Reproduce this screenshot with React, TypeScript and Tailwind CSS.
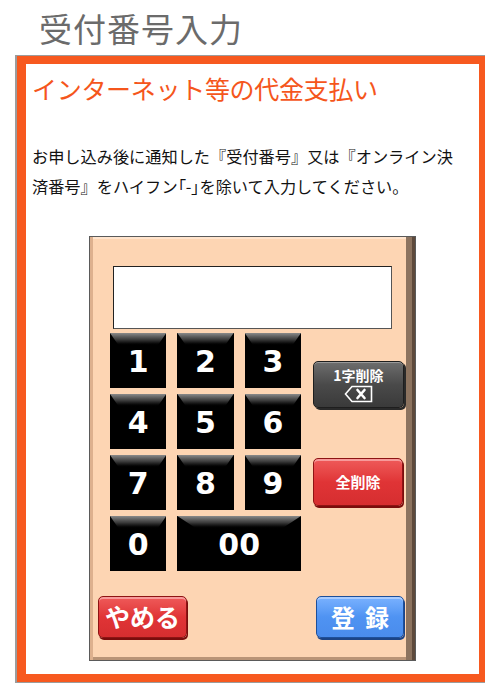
import React from "react";

const jp = { fontFamily: '"Noto Sans CJK JP", "Noto Sans", sans-serif' };
const num = { fontFamily: '"DejaVu Sans", Verdana, sans-serif' };

function Key({ label, wide = false }: { label: string; wide?: boolean }) {
  return (
    <div
      className={`relative flex h-[55px] items-center justify-center bg-black ${
        wide ? "col-span-2" : ""
      }`}
    >
      <div className="absolute inset-x-0 top-0 h-[13px] bg-gradient-to-b from-[#8a8a8a] via-[#3c3c3c] to-black [clip-path:polygon(0_0,100%_0,84%_100%,16%_100%)]" />
      <span
        className="relative pt-[3px] text-[30px] font-bold leading-none text-white"
        style={num}
      >
        {label}
      </span>
    </div>
  );
}

function BackspaceIcon() {
  return (
    <svg width="30" height="18" viewBox="0 0 30 18">
      <path d="M8 1.5 H27.5 V16.5 H8 L1.5 9 Z" fill="none" stroke="#fff" strokeWidth="1.6" />
      <path d="M13.5 5 L20.5 13 M20.5 5 L13.5 13" stroke="#fff" strokeWidth="2.6" strokeLinecap="round" />
    </svg>
  );
}

export default function App() {
  return (
    <div className="relative h-[699px] w-[497px] overflow-hidden bg-white" style={jp}>
      <div className="flex h-[55px] items-center pl-[39px] pt-[2px]">
        <h1 className="text-[33px] font-normal leading-none tracking-[1px] text-[#6b6b6b]">
          受付番号入力
        </h1>
      </div>

      <div className="ml-[15px] w-[470px] border-b border-l-2 border-t border-[#9c9c9c]">
        <div className="h-[626px] border-b-[8px] border-l-[9px] border-r-[6px] border-t-[8px] border-[#f7591f] bg-white">
          <div className="pl-[6px] pt-[7px]">
            <h2 className="h-[34px] text-[25px] font-normal leading-[34px] tracking-[-0.3px] text-[#f5561c]">
              インターネット等の代金支払い
            </h2>
            <p className="mt-[36px] whitespace-nowrap text-[16.2px] leading-[30px] text-[#111]">
              お申し込み後に通知した『受付番号』又は『オンライン決
              <br />
              済番号』をハイフン
              <span style={{ fontFeatureSettings: '"palt"' }}>「-」</span>
              を除いて入力してください。
            </p>
          </div>

          <div className="ml-[63px] mt-[35px] h-[425px] w-[327px] border border-[#5a5a5a] bg-[#fdd5b3] shadow-[inset_3px_0_0_#ddb08e,inset_-3px_0_0_#5e4a3c,inset_-9px_0_0_#8c735f,inset_0_-3px_0_#b99477,inset_0_2px_0_#ffe4cd]">
            <div className="ml-[23px] mt-[29px] h-[63px] w-[279px] border border-[#555] border-l-[#222] border-t-[#222] bg-white" />

            <div className="mt-[4px] flex">
              <div className="ml-[20px] grid w-[191px] grid-cols-3 gap-x-[11px] gap-y-[6px]">
                {["1", "2", "3", "4", "5", "6", "7", "8", "9", "0"].map((k) => (
                  <Key key={k} label={k} />
                ))}
                <Key label="00" wide />
              </div>

              <div className="ml-[12px] flex flex-col">
                <button className="mt-[28px] flex h-[47px] w-[91px] flex-col items-center justify-center rounded-[5px] border border-[#1e1e1e] bg-gradient-to-b from-[#6e6e6e] via-[#4a4a4a] to-[#3a3a3a] shadow-[2px_2px_0_#2a2a2a,inset_0_1px_0_#9a9a9a]">
                  <span className="text-[14px] font-bold leading-[16px] text-white">1字削除</span>
                  <span className="mt-[2px]">
                    <BackspaceIcon />
                  </span>
                </button>
                <button className="mt-[50px] flex h-[48px] w-[90px] items-center justify-center rounded-[5px] border border-[#8e1414] bg-gradient-to-b from-[#ef5a5a] via-[#e03436] to-[#d62e30] shadow-[1px_2px_0_#7a0d0d,inset_0_2px_0_#f79a9a]">
                  <span className="text-[15px] font-bold text-white">全削除</span>
                </button>
              </div>
            </div>

            <div className="mt-[25px] flex justify-between pl-[8px] pr-[11px]">
              <button className="flex h-[42px] w-[89px] items-center justify-center rounded-[5px] border border-[#8e1414] bg-gradient-to-b from-[#ef5a5a] via-[#e03436] to-[#d62e30] shadow-[1px_2px_0_#7a0d0d,inset_0_2px_0_#f79a9a]">
                <span className="pb-[2px] text-[25px] font-bold leading-none text-white">やめる</span>
              </button>
              <button className="flex h-[42px] w-[88px] items-center justify-center rounded-[5px] border border-[#1d4f9a] bg-gradient-to-b from-[#7ab2ff] via-[#4f93f2] to-[#4a8cec] shadow-[1px_2px_0_#1c4486,inset_0_2px_0_#a9ccff]">
                <span className="pl-[10px] text-[24px] font-bold leading-none tracking-[10px] text-white">登録</span>
              </button>
            </div>
          </div>
        </div>
      </div>
    </div>
  );
}
